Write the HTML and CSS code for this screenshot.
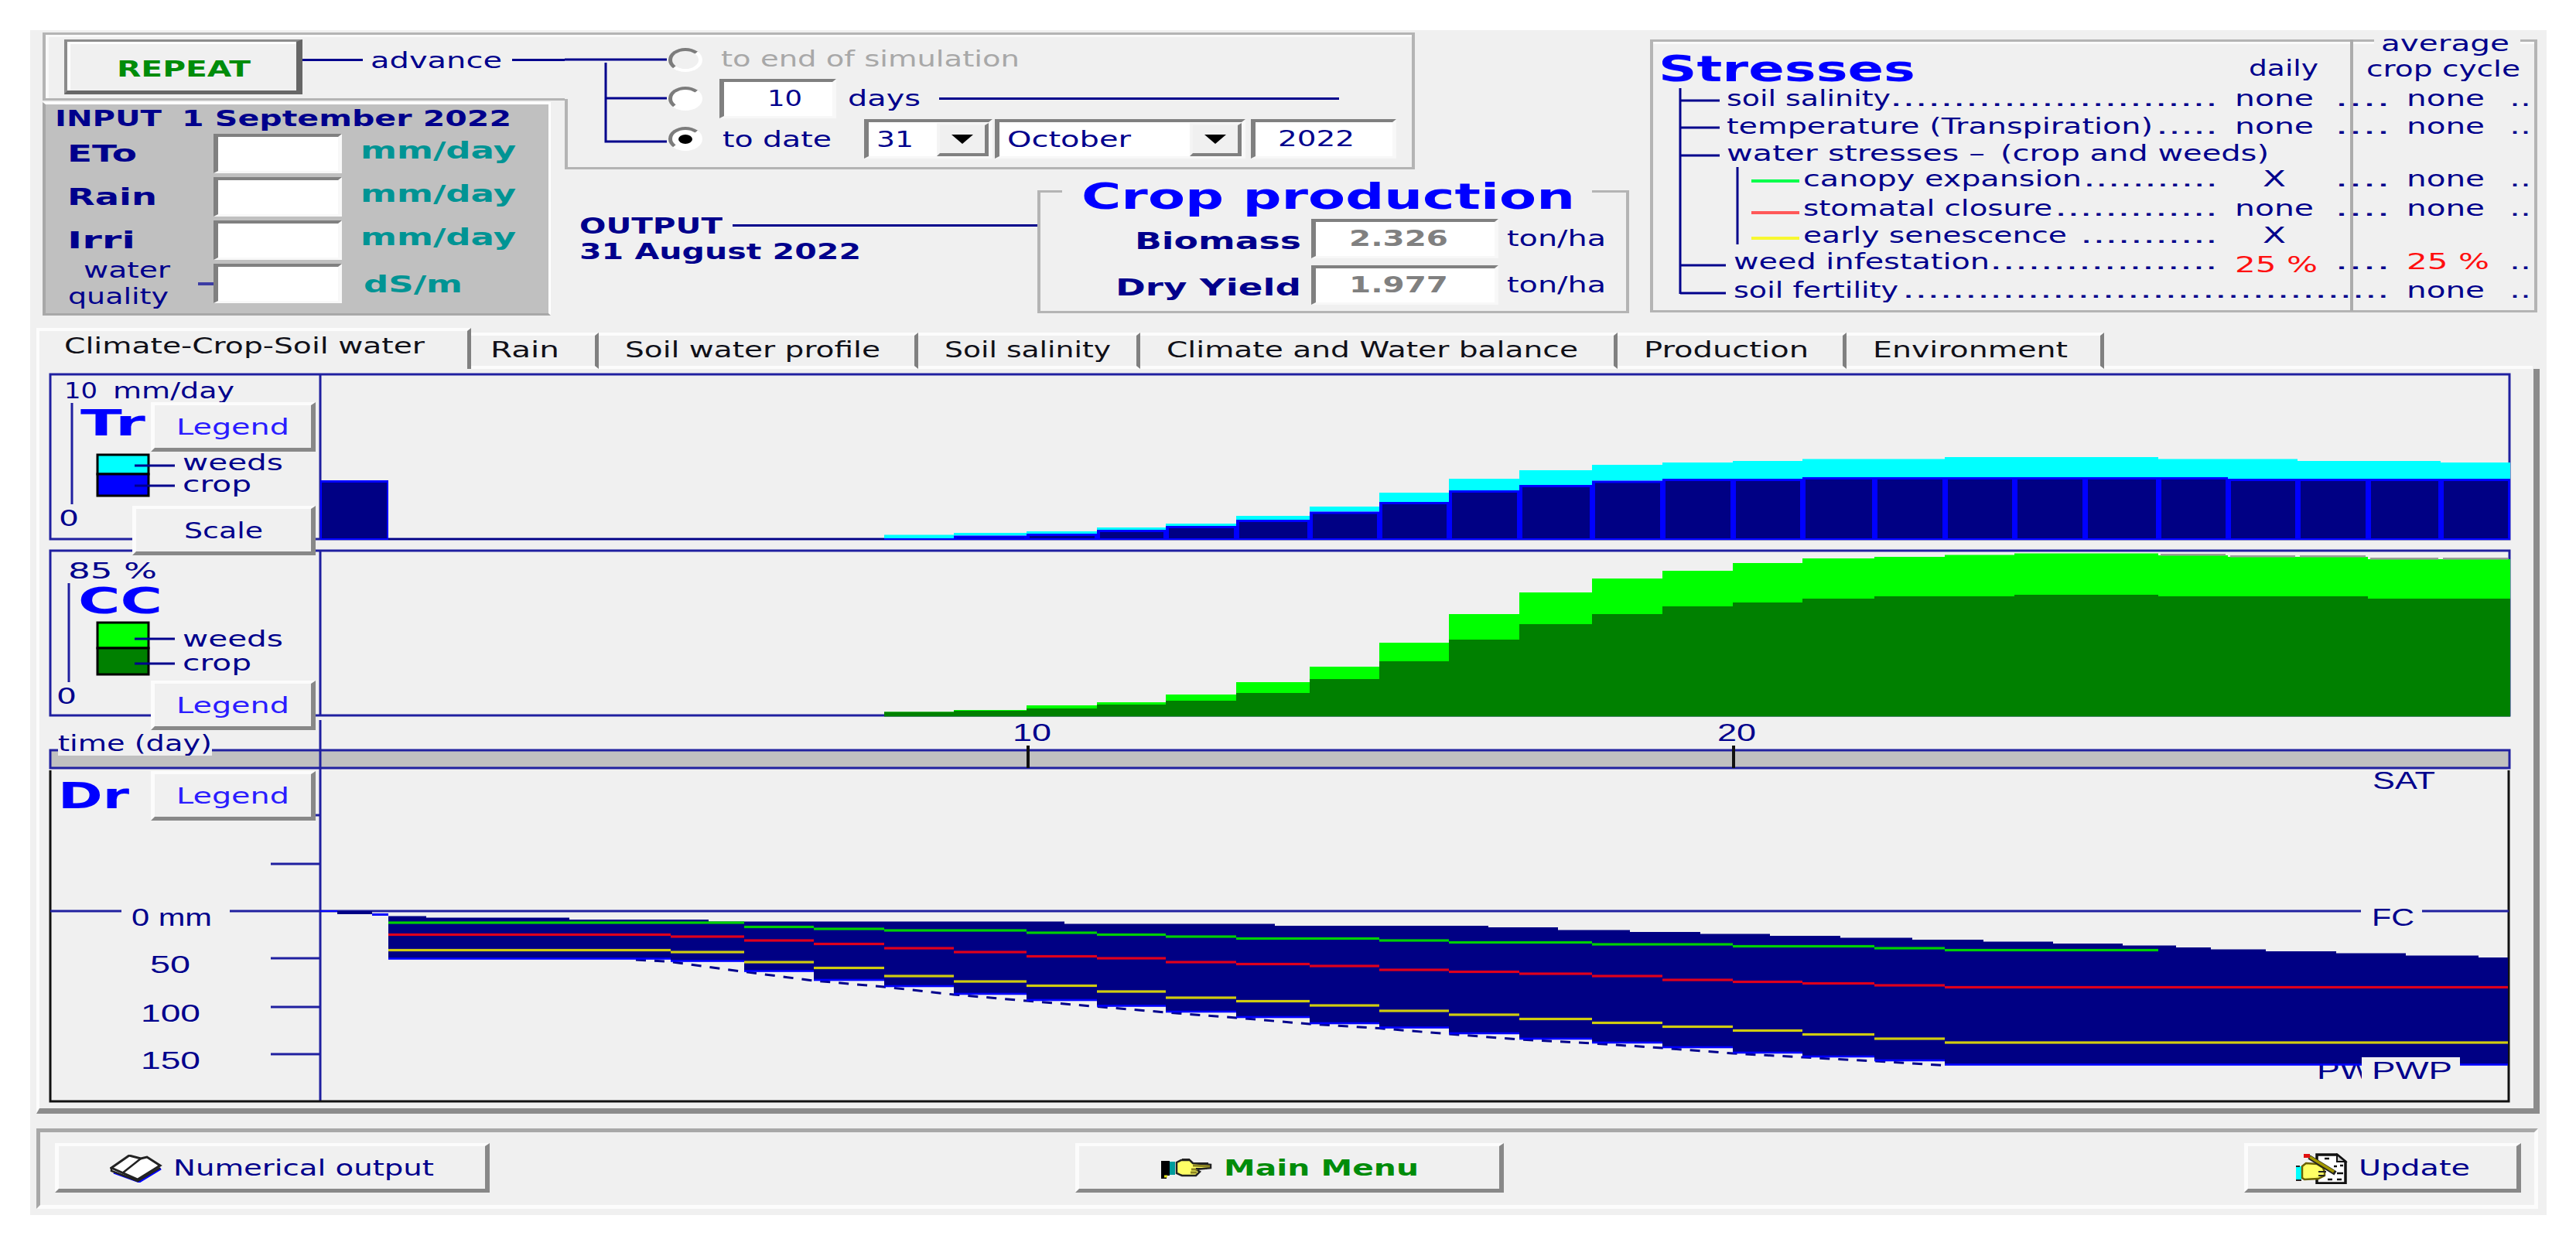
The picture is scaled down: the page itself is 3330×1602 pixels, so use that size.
FILE: index.html
```html
<!DOCTYPE html>
<html lang="en">
<head>
    <meta charset="UTF-8">
    <meta name="viewport" content="width=device-width, initial-scale=1.0">
    <title>Simulation run</title>
    <link rel="stylesheet" href="styles.css">
</head>
<body>
    <div class="window">
        <header class="header">
            <div class="col-input">
                <div class="run-box">
                    <button type="button" class="repeat-btn"><span class="t bold green" data-w="173">REPEAT</span></button>
                    <i class="line line-short"></i>
                    <span class="t advance" data-w="170">advance</span>
                    <i class="line line-rest"></i>
                </div>
                <form class="input-panel">
                    <div class="input-title">
                        <span class="t bold" data-w="138">INPUT</span>
                        <span class="t bold" data-w="426">1 September 2022</span>
                    </div>
                    <div class="input-row">
                        <span class="t big" data-w="90">ETo</span>
                        <input type="text" class="field">
                        <span class="t unit" data-w="201">mm/day</span>
                    </div>
                    <div class="input-row">
                        <span class="t big" data-w="116">Rain</span>
                        <input type="text" class="field">
                        <span class="t unit" data-w="201">mm/day</span>
                    </div>
                    <div class="input-row">
                        <span class="t big" data-w="88">Irri</span>
                        <input type="text" class="field">
                        <span class="t unit" data-w="201">mm/day</span>
                    </div>
                    <div class="input-row">
                        <div class="quality">
                            <div class="quality-text">
                                <span class="t water" data-w="112">water</span>
                                <span class="t" data-w="130">quality</span>
                            </div>
                            <i class="dash"></i>
                        </div>
                        <input type="text" class="field">
                        <span class="t unit unit-quality" data-w="128">dS/m</span>
                    </div>
                </form>
            </div>

            <div class="col-output">
                <div class="advance-box">
                    <svg class="branches" width="132" height="172" viewBox="730 46 132 172">
                        <path d="M730 78H862M783 82V184H862M783 128H862" />
                    </svg>
                    <div class="options">
                        <div class="option">
                            <i class="radio radio-off"></i>
                            <span class="t disabled" data-w="386">to end of simulation</span>
                        </div>
                        <div class="option">
                            <i class="radio"></i>
                            <div class="field field-days"><span class="t" data-w="45">10</span></div>
                            <span class="t" data-w="94">days</span>
                            <i class="line line-days"></i>
                        </div>
                        <div class="option">
                            <i class="radio checked"></i>
                            <span class="t to-date" data-w="141">to date</span>
                            <div class="field combo combo-day"><span class="t" data-w="48">31</span><i class="arrow"></i></div>
                            <div class="field combo combo-month"><span class="t" data-w="160">October</span><i class="arrow"></i></div>
                            <div class="field field-year"><span class="t" data-w="99">2022</span></div>
                        </div>
                    </div>
                </div>
                <div class="output-row">
                    <div class="output">
                        <div class="output-title">
                            <span class="t bold" data-w="185">OUTPUT</span>
                            <i class="line line-output"></i>
                        </div>
                        <span class="t bold" data-w="364">31 August 2022</span>
                    </div>
                    <fieldset class="crop">
                        <legend><span class="t title" data-w="638">Crop production</span></legend>
                        <div class="crop-row">
                            <span class="t big" data-w="215">Biomass</span>
                            <div class="field field-result"><span class="t bold gray" data-w="128">2.326</span></div>
                            <span class="t ton" data-w="128">ton/ha</span>
                        </div>
                        <div class="crop-row">
                            <span class="t big" data-w="240">Dry Yield</span>
                            <div class="field field-result"><span class="t bold gray" data-w="128">1.977</span></div>
                            <span class="t ton" data-w="128">ton/ha</span>
                        </div>
                    </fieldset>
                </div>
            </div>

            <section class="stresses">
                <svg class="tree" width="1147" height="352" viewBox="2133 52 1147 352">
                    <path class="divider" d="M3040 52V403" />
                    <path d="M2172 115V381M2172 131H2223M2172 166H2223M2172 202H2223M2172 344H2231M2172 380H2231M2246 217V317" />
                    <path class="c-green" d="M2264 235H2326" />
                    <path class="c-red" d="M2264 276H2326" />
                    <path class="c-yellow" d="M2264 309H2326" />
                </svg>
                <div class="stress-head">
                    <span class="t title" data-w="332">Stresses</span>
                    <span class="t daily" data-w="90">daily</span>
                    <div class="average">
                        <span class="t patch" data-w="166">average</span>
                        <span class="t" data-w="199">crop cycle</span>
                    </div>
                </div>
                <div class="stress-list">
                    <div class="stress"><span class="t" data-w="212">soil salinity</span><span class="t dots" data-w="424">..........................</span><span class="t" data-w="102">none</span><span class="t" data-w="72">....</span><span class="t" data-w="101">none</span><span class="t" data-w="28">..</span></div>
                    <div class="stress"><span class="t" data-w="551">temperature (Transpiration)</span><span class="t dots" data-w="80">.....</span><span class="t" data-w="102">none</span><span class="t" data-w="72">....</span><span class="t" data-w="101">none</span><span class="t" data-w="28">..</span></div>
                    <div class="stress"><span class="t" data-w="334">water stresses –</span><span class="t group" data-w="347">(crop and weeds)</span></div>
                    <div class="stress sub"><span class="t" data-w="360">canopy expansion</span><span class="t dots" data-w="174">...........</span><span class="t x" data-w="30">X</span><span class="t" data-w="72">....</span><span class="t" data-w="101">none</span><span class="t" data-w="28">..</span></div>
                    <div class="stress sub"><span class="t" data-w="322">stomatal closure</span><span class="t dots" data-w="211">.............</span><span class="t" data-w="102">none</span><span class="t" data-w="72">....</span><span class="t" data-w="101">none</span><span class="t" data-w="28">..</span></div>
                    <div class="stress sub"><span class="t" data-w="341">early senescence</span><span class="t dots" data-w="178">...........</span><span class="t x" data-w="30">X</span></div>
                    <div class="stress low"><span class="t" data-w="331">weed infestation</span><span class="t dots" data-w="295">..................</span><span class="t red down" data-w="107">25 %</span><span class="t" data-w="72">....</span><span class="t red" data-w="107">25 %</span><span class="t" data-w="28">..</span></div>
                    <div class="stress low"><span class="t" data-w="213">soil fertility</span><span class="t dots long" data-w="630">.......................................</span><span class="t" data-w="101">none</span><span class="t" data-w="28">..</span></div>
                </div>
            </section>
        </header>

        <nav class="tabs">
            <div class="tab active"><span class="t" data-w="466">Climate-Crop-Soil water</span></div>
            <div class="tab tab-rain"><span class="t" data-w="89">Rain</span></div>
            <div class="tab tab-profile"><span class="t" data-w="330">Soil water profile</span></div>
            <div class="tab tab-salinity"><span class="t" data-w="215">Soil salinity</span></div>
            <div class="tab tab-balance"><span class="t" data-w="532">Climate and Water balance</span></div>
            <div class="tab tab-production"><span class="t" data-w="213">Production</span></div>
            <div class="tab tab-environment"><span class="t" data-w="252">Environment</span></div>
        </nav>

        <main class="page">
            <!-- transpiration -->
            <svg class="plot" width="3224" height="228" viewBox="51 477 3224 228">
                <path class="axis" d="M65 484H3244V697H65ZM414 484V697M93 521V652" />
                <text x="83" y="515" textLength="43">10</text>
                <text x="146" y="515" textLength="157">mm/day</text>
                <text class="name" x="104" y="563" textLength="84">Tr</text>
                <rect class="swatch tr-weeds" x="126" y="588" width="66" height="25" />
                <rect class="swatch tr-crop" x="126" y="613" width="66" height="28" />
                <path class="lead" d="M174 602H226M174 628H226" />
                <text x="236" y="608" textLength="130">weeds</text>
                <text x="236" y="636" textLength="89">crop</text>
                <text x="76" y="680" textLength="26">0</text>
                <g id="tr-bars"></g>
            </svg>
            <!-- canopy cover -->
            <svg class="plot" width="3224" height="224" viewBox="51 705 3224 224">
                <path class="axis" d="M65 712H3244V925H65ZM414 712V925M89 754V882" />
                <text x="88" y="748" textLength="115">85 %</text>
                <text class="name" x="101" y="793" textLength="109">CC</text>
                <rect class="swatch cc-weeds" x="126" y="805" width="66" height="33" />
                <rect class="swatch cc-crop" x="126" y="838" width="66" height="34" />
                <path class="lead" d="M174 826H226M174 858H226" />
                <text x="236" y="836" textLength="130">weeds</text>
                <text x="236" y="867" textLength="89">crop</text>
                <text x="73" y="910" textLength="26">0</text>
                <g id="cc-bars"></g>
            </svg>
            <!-- root zone depletion -->
            <svg class="plot" width="3224" height="504" viewBox="51 929 3224 504">
                <rect class="band" x="65" y="971" width="3179" height="22" />
                <path class="axis" d="M65 993V970H3244V993ZM414 931V1424" />
                <rect class="paper" x="75" y="948" width="199" height="29" />
                <text x="75" y="971" textLength="199">time (day)</text>
                <path class="frame" d="M65 996V1424H3243V996" />
                <path class="tick" d="M1329 964V993M2241 964V993" />
                <text class="num" x="1309" y="958" textLength="50">10</text>
                <text class="num" x="2220" y="958" textLength="50">20</text>
                <path class="axis" d="M350 1117H414M350 1239H414M350 1302H414M350 1363H414M405 1054H414M65 1178H157M297 1178H3052M3131 1178H3243" />
                <text class="name" x="75" y="1045" textLength="92">Dr</text>
                <text class="num" x="170" y="1197" textLength="104">0 mm</text>
                <text class="num" x="194" y="1258" textLength="52">50</text>
                <text class="num" x="182" y="1321" textLength="77">100</text>
                <text class="num" x="182" y="1382" textLength="77">150</text>
                <text class="num" x="2995" y="1395" textLength="72">PW</text>
                <g id="dr-area"></g>
                <text class="num" x="3067" y="1020" textLength="81">SAT</text>
                <rect class="paper" x="3053" y="1170" width="78" height="18" />
                <text class="num" x="3066" y="1197" textLength="55">FC</text>
                <rect class="paper" x="3053" y="1367" width="127" height="32" />
                <text class="num" x="3066" y="1395" textLength="104">PWP</text>
            </svg>
            <button type="button" class="btn side-btn at-tr"><span class="t blue" data-w="146">Legend</span></button>
            <button type="button" class="btn side-btn at-scale"><span class="t" data-w="102">Scale</span></button>
            <button type="button" class="btn side-btn at-cc"><span class="t blue" data-w="146">Legend</span></button>
            <button type="button" class="btn side-btn at-dr"><span class="t blue" data-w="146">Legend</span></button>
        </main>

        <footer class="footer">
            <button type="button" class="btn output-btn">
                <svg width="68" height="36" viewBox="0 0 68 36">
                    <path d="M5 23L38 35L66 18" fill="none" stroke="#0000ff" stroke-width="3" />
                    <path d="M2 17L25 1L40 5L48 3L65 14L36 32Z" fill="#fff" stroke="#222" stroke-width="3" />
                    <path d="M40 5L16 24M2 17V21L36 34L65 17" fill="none" stroke="#222" stroke-width="2.5" />
                </svg>
                <span class="t" data-w="337">Numerical output</span>
            </button>
            <button type="button" class="btn menu-btn">
                <svg width="68" height="27" viewBox="0 0 68 27">
                    <path d="M1 3H12V22H8V26H1Z" fill="#000" />
                    <rect x="12" y="4" width="7" height="17" fill="#009c9c" />
                    <path d="M5 23H9" stroke="#e8e820" stroke-width="3" />
                    <path d="M21 5L27 2H38L42 6L65 8V12L46 14L51 17L46 22L28 22L21 19Z" fill="#ffff66" stroke="#222" stroke-width="2.5" />
                    <path d="M42 9L64 10M40 14H48M39 18H47" stroke="#8c8420" stroke-width="3" />
                    <path d="M28 1H38M46 6H62M46 13H60" stroke="#222" stroke-width="2" />
                </svg>
                <span class="t bold green" data-w="252">Main Menu</span>
            </button>
            <button type="button" class="btn update-btn">
                <svg width="68" height="40" viewBox="0 0 68 40">
                    <path d="M28 2H54L65 11V39H28Z" fill="#fff" stroke="#111" stroke-width="3.5" />
                    <path d="M54 2V11H65Z" fill="#ccc" stroke="#111" stroke-width="2" />
                    <path d="M38 7H44M50 17H54M58 16H62M54 26H62M42 34H48M54 34H60" stroke="#111" stroke-width="2.5" />
                    <rect x="1" y="17" width="7" height="18" fill="#00ffff" />
                    <path d="M1 17H6M1 35H8" stroke="#222" stroke-width="2" />
                    <path d="M9 17L14 13L28 14L36 19L38 24V29L30 33L12 34L9 32Z" fill="#ffff66" stroke="#6b6200" stroke-width="2.5" />
                    <path d="M30 24H40M30 29H38" stroke="#222" stroke-width="2" />
                    <path d="M18 5L52 26" stroke="#222" stroke-width="6" />
                    <path d="M19 5L50 24" stroke="#a09600" stroke-width="3.5" />
                    <rect x="11" y="1" width="8" height="5" fill="#e01010" />
                </svg>
                <span class="t" data-w="144">Update</span>
            </button>
        </footer>
    </div>
    <script src="script.js"></script>
</body>
</html>
```
FILE: styles.css
```css
body {
    margin: 0;
    background-color: #fff;
    font-family: "DejaVu Sans", Verdana, sans-serif;
    font-size: 28px;
    line-height: 1;
    color: #00008c;
}
.window {
    box-sizing: border-box;
    width: 3253px;
    height: 1532px;
    margin: 39px 0 0 39px;
    background-color: #f0f0f0;
}
button {
    font: inherit;
    color: inherit;
    cursor: pointer;
}
i {
    display: block;
    flex: none;
}

/* texts are stretched to the width in data-w, see script.js */
.t {
    display: block;
    flex: none;
    white-space: nowrap;
    text-align: left;
}
.t b {
    display: inline-block;
    font-weight: inherit;
    transform-origin: 0 0;
}
.bold {
    font-weight: bold;
}
.big {
    font-size: 31px;
    font-weight: bold;
}
.title {
    font-size: 47px;
    font-weight: bold;
    color: #0000ff;
}
.green {
    color: #008c0a;
}
.blue {
    color: #2a1cff;
}
.gray {
    color: #808080;
}
.red {
    color: #ff1010;
}
.disabled {
    color: #a8a8a8;
}
.line {
    height: 3px;
    background-color: #00008c;
}
.field {
    box-sizing: border-box;
    flex: none;
    height: 51px;
    padding: 0;
    border-style: solid;
    border-width: 4px 5px 3px 6px;
    border-color: #808080 #f8f8f8 #f8f8f8 #808080;
    border-radius: 0;
    background-color: #fff;
    display: flex;
    align-items: center;
}

/* header */
.header {
    display: grid;
    grid-template-columns: 675px 1403px 1147px;
    height: 385px;
    padding-left: 16px;
}
.run-box {
    box-sizing: border-box;
    display: flex;
    align-items: flex-start;
    height: 88px;
    margin-top: 3px;
    border: 3px solid #b4b4b4;
    border-right: none;
    border-left-width: 4px;
    box-shadow: inset 4px 3px 0 #fafafa;
    padding: 6px 0 0 24px;
}
.repeat-btn {
    box-sizing: border-box;
    width: 308px;
    height: 71px;
    border-style: solid;
    border-width: 3px 8px 5px 4px;
    border-color: #8c8c8c #666 #666 #8c8c8c;
    box-shadow: inset 4px 3px 0 #fff;
    background-color: #f0f0f0;
    padding: 8px 0 0 4px;
    display: flex;
    justify-content: center;
    align-items: center;
}
.advance {
    margin: 14px 13px 0 10px;
}
.line-short {
    width: 78px;
    margin-top: 25px;
}
.line-rest {
    flex: 1;
    margin-top: 25px;
}
.input-panel {
    box-sizing: border-box;
    width: 657px;
    height: 276px;
    margin-top: 2px;
    border: 3px solid #a8a8a8;
    border-left-width: 4px;
    border-right-color: #fff;
    border-top-color: #fff;
    background-color: #c0c0c0;
}
.input-title {
    display: flex;
    gap: 26px;
    height: 33px;
    padding: 5px 0 0 12px;
}
.input-row {
    display: grid;
    grid-template-columns: 217px 166px 210px;
    align-items: center;
    height: 51px;
    margin-bottom: 5px;
}
.input-row .field {
    width: 166px;
}
.input-row > .big {
    margin-left: 28px;
}
.unit {
    font-size: 30px;
    font-weight: bold;
    color: #009494;
    padding-bottom: 8px;
    margin-left: 24px;
}
.unit-quality {
    padding: 3px 0 0 4px;
}
.quality {
    display: flex;
    align-items: center;
    justify-content: space-between;
    height: 51px;
    padding-left: 29px;
}
.quality-text {
    display: flex;
    flex-direction: column;
    gap: 6px;
}
.water {
    margin-left: 20px;
}
.dash {
    width: 20px;
    height: 4px;
    background-color: #3c3ca4;
}
.advance-box {
    position: relative;
    box-sizing: border-box;
    display: flex;
    width: 1099px;
    height: 177px;
    margin-top: 3px;
    border: 3px solid #b4b4b4;
    border-right-width: 4px;
    border-left: none;
    box-shadow: inset 0 3px 0 #fafafa;
}
/* the left edge only starts below the run box */
.advance-box::before {
    content: "";
    position: absolute;
    left: 0;
    top: 83px;
    width: 4px;
    height: 90px;
    background-color: #b4b4b4;
}
.branches path {
    fill: none;
    stroke: #00008c;
    stroke-width: 3;
}
.options {
    padding-top: 6px;
}
.option {
    display: flex;
    align-items: center;
    height: 52px;
}
.option:nth-child(2) {
    height: 49px;
}
.option:nth-child(3) {
    height: 55px;
}
.radio {
    box-sizing: border-box;
    width: 44px;
    height: 31px;
    margin-left: 2px;
    border-radius: 50%;
    border-style: solid;
    border-width: 4px 5px;
    border-color: #7c7c7c #fff #fff #7c7c7c;
    background-color: #fff;
}
.radio-off {
    background-color: #f0f0f0;
}
.checked {
    display: flex;
    align-items: center;
    justify-content: center;
}
.checked::after {
    content: "";
    width: 18px;
    height: 12px;
    border-radius: 50%;
    background-color: #000;
}
.option .t {
    margin-left: 24px;
}
.option .t.to-date {
    margin-left: 26px;
    padding-top: 3px;
}
.field-days {
    width: 151px;
    margin-left: 22px;
}
.option .field-days .t {
    margin-left: 56px;
}
.option .field-days + .t {
    margin-left: 15px;
}
.line-days {
    width: 517px;
    margin-left: 24px;
}
.combo {
    justify-content: space-between;
}
.combo-day {
    width: 166px;
    margin-left: 42px;
}
.combo-month {
    width: 324px;
    margin-left: 3px;
}
.option .combo .t {
    margin-left: 10px;
    padding-top: 2px;
}
.arrow {
    box-sizing: border-box;
    width: 67px;
    height: 43px;
    border-style: solid;
    border-width: 3px 5px 4px 4px;
    border-color: #f4f4f4 #808080 #808080 #f4f4f4;
    background-color: #f0f0f0;
    display: flex;
    align-items: center;
    justify-content: center;
}
.arrow::after {
    content: "";
    border-style: solid;
    border-width: 12px 14px 0 14px;
    border-color: #000 transparent transparent transparent;
}
.field-year {
    width: 188px;
    margin-left: 7px;
}
.option .field-year .t {
    margin-left: 29px;
}
.output-row {
    display: flex;
}
.output {
    width: 592px;
    padding: 60px 0 0 19px;
}
.output-title {
    display: flex;
    height: 33px;
}
.line-output {
    flex: 1;
    margin: 11px 0 0 13px;
}
.crop {
    box-sizing: border-box;
    min-width: 0;
    width: 765px;
    height: 175px;
    margin: 11px 0 0 0;
    padding: 0;
    border: 3px solid #b4b4b4;
    border-left-width: 4px;
    border-right-width: 4px;
}
.crop legend {
    height: 34px;
    margin-left: 28px;
    padding: 0 22px 0 25px;
}
.crop-row {
    display: flex;
    align-items: center;
    justify-content: flex-end;
    height: 51px;
    margin: 0 26px 9px 0;
}
legend + .crop-row {
    margin-top: 19px;
}
.field-result {
    width: 242px;
    margin: 0 11px 0 13px;
}
.field-result .t {
    margin-left: 43px;
}
.crop-row .big {
    padding-top: 5px;
}
.stresses {
    position: relative;
    box-sizing: border-box;
    width: 1147px;
    height: 353px;
    margin-top: 12px;
    border: 3px solid #b4b4b4;
    border-left-width: 4px;
    border-right-width: 4px;
    box-shadow: inset 0 3px 0 #fafafa;
}
.tree {
    position: absolute;
    left: -4px;
    top: -3px;
}
.tree path {
    fill: none;
    stroke: #00008c;
    stroke-width: 3;
}
.tree .divider {
    stroke: #acacac;
    stroke-width: 4;
}
.tree .c-green {
    stroke: #00ff4c;
    stroke-width: 4;
}
.tree .c-red {
    stroke: #ff5858;
    stroke-width: 4;
}
.tree .c-yellow {
    stroke: #f8f830;
    stroke-width: 4;
}
.stress-head {
    position: relative;
    display: flex;
    height: 60px;
}
.stress-head .title {
    margin: 11px 0 0 7px;
}
.stress-head .daily {
    margin: 21px 0 0 431px;
}
.average {
    margin: -11px 0 0 62px;
}
.patch {
    margin: 0 -12px 5px 10px;
    padding: 0 14px 0 9px;
    background-color: #f0f0f0;
}
.stress-list {
    position: relative;
    display: grid;
    grid-template-columns: 1139px;
    grid-template-rows: 36px 35px 33px 38px 35px 34px 37px 30px;
}
.stress {
    display: grid;
    grid-template-columns: auto minmax(0, 1fr) 129px 93px 133px 32px;
    align-items: start;
    padding-left: 95px;
}
.stress.sub {
    padding-left: 194px;
}
.stress.low {
    padding-left: 104px;
}
.stress .dots {
    justify-self: end;
    margin-right: 22px;
}
.stress .x {
    margin-left: 36px;
}
.stress .down {
    padding-top: 4px;
}
.stress .dots.long {
    grid-column: 2 / 5;
}
.stress .group {
    grid-column: 2 / 4;
    margin-left: 20px;
}

/* tabs */
.tabs {
    display: flex;
    align-items: flex-end;
    height: 53px;
    padding-left: 8px;
    color: #101018;
}
.tab {
    box-sizing: border-box;
    height: 47px;
    border-top: 4px solid #fcfcfc;
    border-right: 5px solid #808080;
    border-bottom: 4px solid #fcfcfc;
    padding: 5px 0 0 34px;
}
.tab.active {
    width: 562px;
    height: 53px;
    padding: 6px 0 0 32px;
    border-bottom: none;
    border-left: 4px solid #fcfcfc;
}
.tab-rain {
    width: 165px;
    padding-left: 25px;
}
.tab-profile {
    width: 413px;
}
.tab-salinity {
    width: 287px;
}
.tab-balance {
    width: 617px;
}
.tab-production {
    width: 296px;
}
.tab-environment {
    width: 333px;
}
.tabs::after {
    content: "";
    flex: 1;
    height: 4px;
    margin-right: 18px;
    background-color: #fcfcfc;
}

/* charts */
.page {
    position: relative;
    box-sizing: border-box;
    width: 3236px;
    height: 963px;
    margin-left: 8px;
    border-style: solid;
    border-width: 0 8px 7px 4px;
    border-color: #fcfcfc #8c8c8c #8c8c8c #fcfcfc;
}
.plot {
    display: block;
}
.plot text {
    fill: #00008c;
}
.plot .num {
    font-family: "Liberation Sans", Arial, sans-serif;
    font-size: 31px;
}
.plot .name {
    font-size: 47px;
    font-weight: bold;
    fill: #0000ff;
}
.axis {
    fill: none;
    stroke: #2020a0;
    stroke-width: 3;
}
.lead {
    stroke: #00008c;
    stroke-width: 3;
}
.tick,
.frame {
    fill: none;
    stroke: #111;
    stroke-width: 3;
}
.tick {
    stroke-width: 4;
}
.band {
    fill: #c0c0c0;
}
.paper {
    fill: #f0f0f0;
}
.swatch {
    stroke: #000;
    stroke-width: 3;
}
.tr-weeds {
    fill: #00ffff;
}
.tr-crop {
    fill: #0000ff;
}
.cc-weeds {
    fill: #00ff00;
}
.cc-crop {
    fill: #008000;
}
.bar-edge {
    fill: #0000ff;
}
.bar-fill,
.body {
    fill: #000084;
}
.floor {
    fill: #0000ff;
}
.potential {
    fill: #9c9c9c;
}
.dr-green {
    fill: #00d000;
}
.dr-red {
    fill: #e0001c;
}
.dr-yellow {
    fill: #d0cc10;
}
.roots {
    fill: none;
    stroke: #00008c;
    stroke-width: 3;
    stroke-dasharray: 13 11;
}

/* raised buttons */
.btn {
    box-sizing: border-box;
    border-style: solid;
    border-width: 4px 6px 5px 5px;
    border-color: #fcfcfc #888 #888 #fcfcfc;
    background-color: #f0f0f0;
    padding: 3px 0 0 0;
    display: flex;
    align-items: center;
    justify-content: center;
}
.side-btn {
    position: absolute;
    left: 144px;
    width: 213px;
    height: 64px;
}
.at-tr {
    top: 43px;
}
.at-scale {
    left: 120px;
    top: 177px;
    width: 237px;
}
.at-cc {
    top: 403px;
}
.at-dr {
    top: 520px;
}
.footer {
    box-sizing: border-box;
    display: flex;
    width: 3234px;
    height: 104px;
    margin: 19px 0 0 8px;
    padding: 14px 17px 0 19px;
    border-style: solid;
    border-width: 5px;
    border-color: #a8a8a8 #fcfcfc #fcfcfc #a8a8a8;
}
.footer .btn {
    height: 64px;
    gap: 14px;
}
.output-btn {
    width: 562px;
}
.menu-btn {
    width: 554px;
    margin-left: 757px;
}
.update-btn {
    width: 358px;
    margin-left: auto;
}
```
FILE: script.js
```js
// stretch every label to its width
document.querySelectorAll(".t").forEach((el) => {
    const inner = document.createElement("b");
    inner.textContent = el.textContent;
    el.textContent = "";
    el.appendChild(inner);
    const width = Number(el.dataset.w);
    const natural = inner.getBoundingClientRect().width;
    inner.style.transform = `scaleX(${width / natural})`;
    el.style.width = `${width}px`;
});
document.querySelectorAll("text[textLength]").forEach((el) => {
    el.setAttribute("lengthAdjust", "spacingAndGlyphs");
});

function rect(group, cls, x, y, x2, y2) {
    const el = document.createElementNS("http://www.w3.org/2000/svg", "rect");
    el.setAttribute("class", cls);
    el.setAttribute("x", x);
    el.setAttribute("y", y);
    el.setAttribute("width", Math.max(x2 - x, 0));
    el.setAttribute("height", Math.max(y2 - y, 0));
    group.appendChild(el);
}

// left edges of the days, the last one closes the plot
const days = [1143, 1233, 1327, 1418, 1507, 1598, 1693, 1783, 1873, 1964, 2058, 2149,
    2240, 2330, 2423, 2514, 2604, 2695, 2790, 2880, 2970, 3061, 3155, 3245];

// [top of weeds, top of crop]
const tr = [[691.5, 696], [689, 692.5], [687, 690], [682, 685], [677, 680], [667, 672],
    [655, 661.5], [637, 649], [619, 634], [608, 627], [601, 621.5], [598, 619], [596, 619],
    [593.5, 617], [593.5, 617], [591, 617], [591, 617], [591, 617], [593.5, 617],
    [593.5, 619], [596, 619], [596, 619], [598, 619]];
const cc = [[920, 920.5], [918, 919], [912, 916], [908, 911], [898, 906], [882, 896],
    [862, 878], [831, 855], [794, 827], [766, 807], [748, 794], [738, 784], [728, 779],
    [722, 774], [720, 771], [717.5, 771], [715.5, 769], [715.5, 769], [718, 771],
    [720, 771], [720, 771], [723, 774], [723, 774]];

const trBars = document.getElementById("tr-bars");
rect(trBars, "bar-edge", 414, 621, 502, 698);
rect(trBars, "bar-fill", 416, 624, 500, 696);
rect(trBars, "body", 502, 696, 1143, 698);
tr.forEach(([weeds, crop], i) => {
    rect(trBars, "tr-weeds", days[i], weeds, days[i + 1], crop);
    rect(trBars, "bar-edge", days[i], crop, days[i + 1], 698);
    rect(trBars, "bar-fill", days[i] + 4, crop + 3, days[i + 1] - 3, 696);
});

const ccBars = document.getElementById("cc-bars");
cc.forEach(([weeds, crop], i) => {
    rect(ccBars, "cc-weeds", days[i], weeds, days[i + 1], crop);
    rect(ccBars, "cc-crop", days[i], crop, days[i + 1], 926.5);
    if (i >= 18) {
        rect(ccBars, "potential", days[i] + 3, weeds - 2, days[i + 1] - 3, weeds + 0.5);
    }
});

// steps as [x, y], every step runs up to the x of the next one
const top_ = [[502, 1184.5], [551, 1186.5], [736, 1189], [916, 1191.5], [1376, 1194.5],
    [1648, 1197], [1924, 1199], [2014, 1202.5], [2107, 1205], [2198, 1207.5], [2288, 1210],
    [2379, 1212.5], [2472, 1215], [2564, 1217.5], [2654, 1220], [2744, 1222.5], [2813, 1225],
    [2858, 1227.5], [2929, 1230], [3020, 1232.5], [3110, 1235.5], [3204, 1238]];
const bottom = [[502, 1239.5], [867, 1242.5], [962, 1255.5], [1052, 1267], [1143, 1275],
    [1233, 1285], [1327, 1293], [1418, 1300.5], [1507, 1308], [1598, 1315], [1693, 1323],
    [1783, 1328.5], [1873, 1336], [1964, 1343], [2058, 1348], [2149, 1354], [2240, 1361],
    [2330, 1366], [2423, 1371], [2514, 1376.5]];
const green = [[502, 1193], [962, 1198.5], [1052, 1201], [1143, 1203], [1327, 1206],
    [1418, 1208.5], [1507, 1211], [1598, 1213.5], [1783, 1216], [1873, 1218.5],
    [2058, 1221], [2240, 1223.5], [2423, 1226], [2514, 1228.5]];
const red = [[502, 1208.5], [867, 1211], [962, 1216], [1052, 1220.5], [1143, 1226],
    [1233, 1231], [1327, 1236.5], [1418, 1239], [1507, 1244], [1598, 1246.5], [1693, 1249],
    [1783, 1254], [1873, 1256.5], [1964, 1259], [2058, 1262], [2149, 1267], [2240, 1269.5],
    [2330, 1271.5], [2423, 1274], [2514, 1276.5]];
const yellow = [[502, 1228.5], [867, 1231], [962, 1244], [1052, 1251.5], [1143, 1262],
    [1233, 1269], [1327, 1274.5], [1418, 1282], [1507, 1290], [1598, 1294.5], [1693, 1300],
    [1783, 1307], [1873, 1312], [1964, 1317.5], [2058, 1322.5], [2149, 1327.5],
    [2240, 1332.5], [2330, 1337.5], [2423, 1343], [2514, 1348]];

const drArea = document.getElementById("dr-area");

function stepPath(steps, end) {
    return steps.map(([x, y], i) => `${x} ${y}H${i + 1 < steps.length ? steps[i + 1][0] : end}`).join("L");
}

function stepLine(cls, steps, end, half) {
    steps.forEach(([x, y], i) => {
        const x2 = i + 1 < steps.length ? steps[i + 1][0] : end;
        rect(drArea, cls, x, y - half, x2, y + half);
    });
}

function addPath(cls, d) {
    const el = document.createElementNS("http://www.w3.org/2000/svg", "path");
    el.setAttribute("class", cls);
    el.setAttribute("d", d);
    drArea.appendChild(el);
}

addPath("roots", "M822 1241L" + bottom.slice(1).map(([x, y]) => `${x} ${y + 1}`).join("L"));
// area between the two step lines, the bottom one walked backwards
let area = "M" + stepPath(top_, 3242) + `V${bottom[bottom.length - 1][1]}`;
for (let i = bottom.length - 1; i >= 0; i--) {
    area += `H${bottom[i][0]}`;
    if (i > 0) {
        area += `V${bottom[i - 1][1]}`;
    }
}
addPath("body", area + "Z");
rect(drArea, "floor", 414, 1177, 436, 1179);
rect(drArea, "body", 436, 1178, 481, 1182);
rect(drArea, "floor", 481, 1181, 502, 1184);
stepLine("floor", bottom, 3242, 1.3);
stepLine("dr-green", green, 2790, 1.6);
stepLine("dr-red", red, 3242, 1.6);
stepLine("dr-yellow", yellow, 3242, 1.6);
```
